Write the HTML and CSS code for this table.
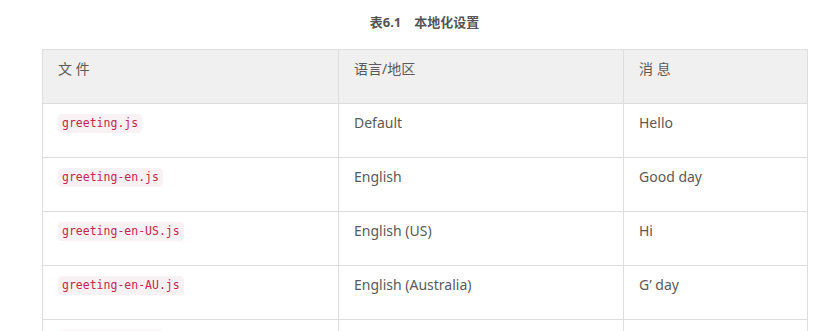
FILE: index.html
```html
<!DOCTYPE html>
<html lang="zh-CN">
<head>
<meta charset="utf-8">
<link rel="stylesheet" href="styles.css">
</head>
<body>
<div class="wrap">
  <p class="caption">表6.1　本地化设置</p>
  <table class="tbl">
    <colgroup>
      <col class="c1"><col class="c2"><col class="c3">
    </colgroup>
    <thead>
      <tr><th>文 件</th><th>语言/地区</th><th>消 息</th></tr>
    </thead>
    <tbody>
      <tr><td><code>greeting.js</code></td><td>Default</td><td>Hello</td></tr>
      <tr><td><code>greeting-en.js</code></td><td>English</td><td>Good day</td></tr>
      <tr><td><code>greeting-en-US.js</code></td><td>English (US)</td><td>Hi</td></tr>
      <tr><td><code>greeting-en-AU.js</code></td><td>English (Australia)</td><td>G’ day</td></tr>
      <tr><td><code>greeting-fr.js</code></td><td>French</td><td>Bonjour</td></tr>
    </tbody>
  </table>
</div>
</body>
</html>
```
FILE: styles.css
```css
html, body {
  margin: 0;
  padding: 0;
  background: #fff;
}
body {
  font-family: "Noto Sans", "Noto Sans CJK SC", sans-serif;
  color: #5a5a5a;
  font-size: 14px;
}
.wrap {
  padding-left: 42px;
  width: 765px;
}
.caption {
  margin: 0;
  padding-top: 12px;
  height: 49px;
  box-sizing: border-box;
  text-align: center;
  font-weight: bold;
  font-size: 13px;
  line-height: 20px;
  color: #555;
}
.tbl {
  border-collapse: collapse;
  width: 765px;
  table-layout: fixed;
}
.c1 { width: 296px; }
.c2 { width: 285px; }
.c3 { width: 184px; }
.tbl th, .tbl td {
  border: 1px solid #ddd;
  padding: 8px 15px 23px;
  line-height: 22px;
  height: 22px;
  text-align: left;
  vertical-align: top;
  font-weight: normal;
}
.tbl th {
  background: #f0f0f0;
}
code {
  display: inline-block;
  vertical-align: top;
  margin-top: 2px;
  font-family: "DejaVu Sans Mono", monospace;
  font-size: 11.5px;
  line-height: 15px;
  color: #c7254e;
  background: #f9f2f4;
  padding: 2px 4px;
  border-radius: 4px;
}
```
